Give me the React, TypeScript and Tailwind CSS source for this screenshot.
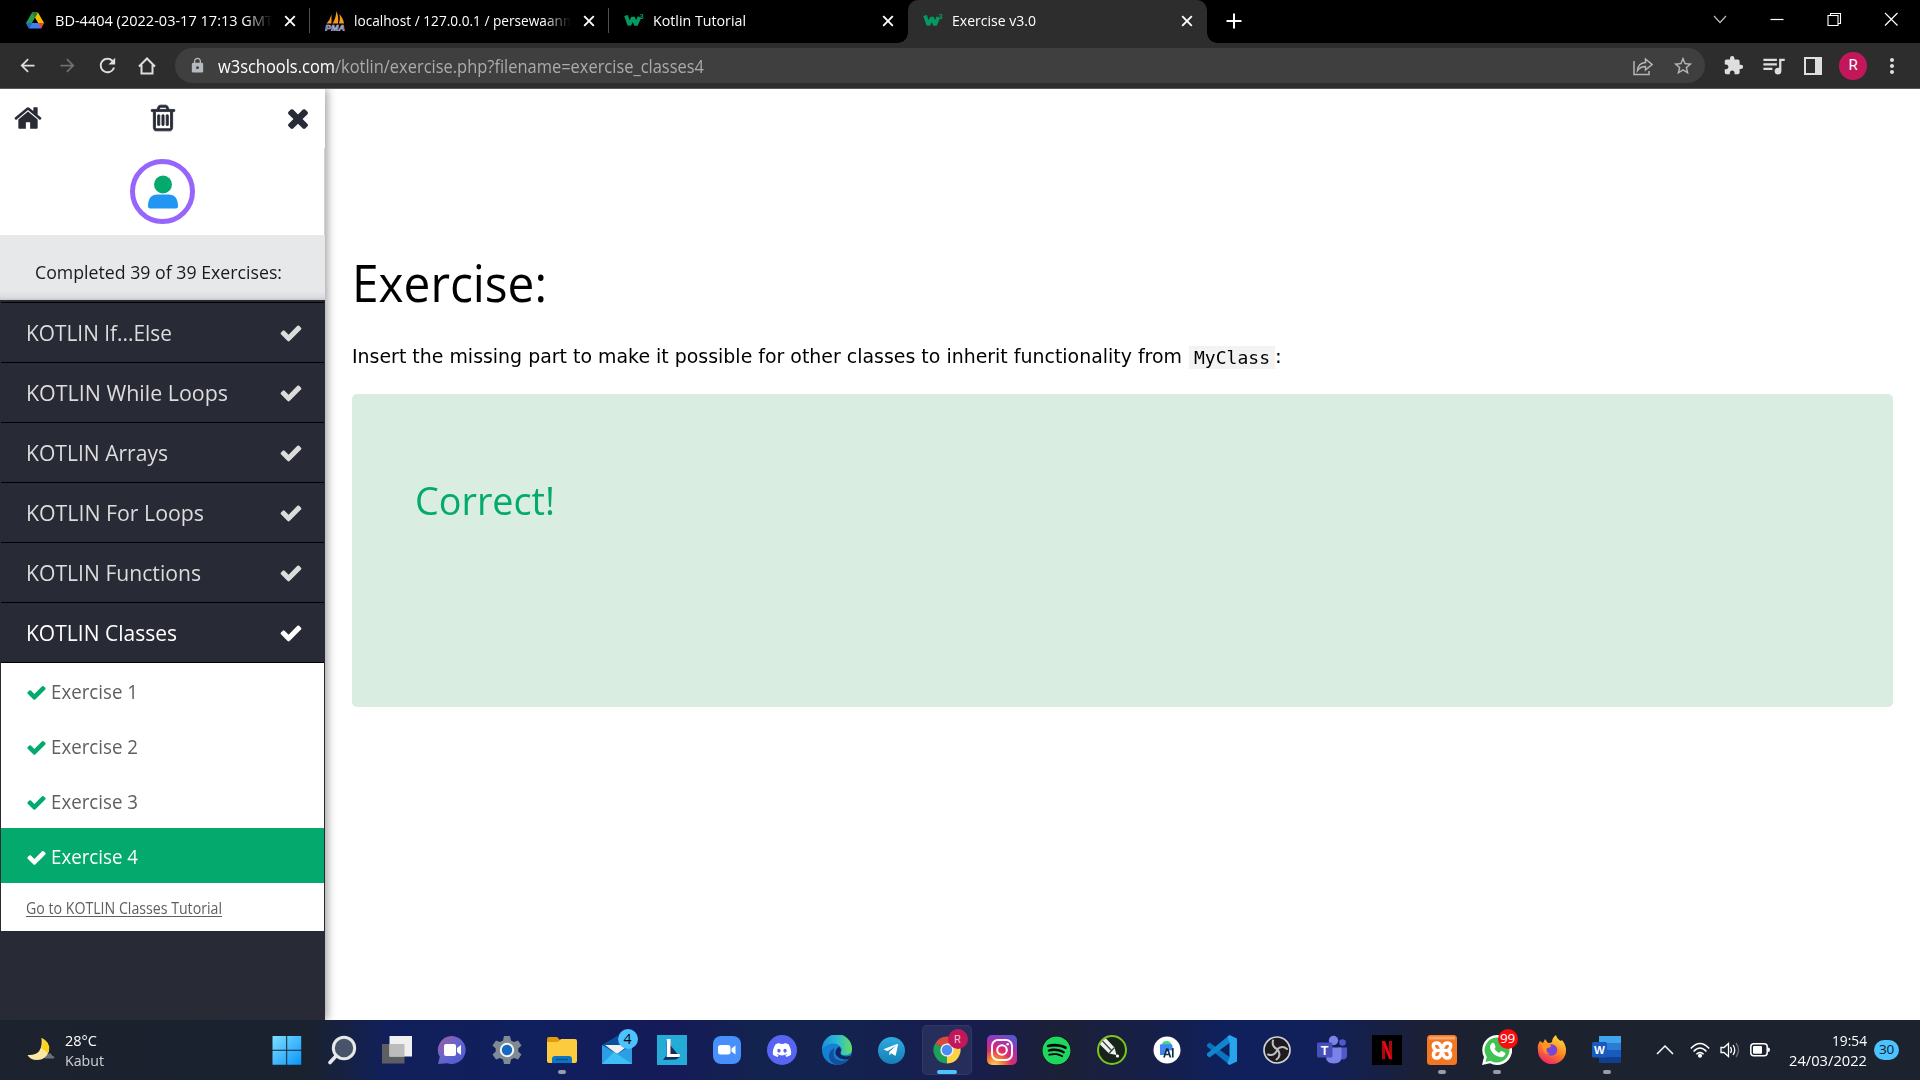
import React, { useLayoutEffect, useRef, useState } from "react";
import { FaDiscord, FaSpotify, FaTelegramPlane } from "react-icons/fa";
import {
  MdArrowBack,
  MdArrowForward,
  MdExtension,
  MdLock,
  MdMoreVert,
  MdQueueMusic,
  MdRefresh,
  MdStarBorder,
} from "react-icons/md";

/** One line of text, condensed or widened to an exact advance width. */
function Fit({ w, className = "", inner = "", children }: { w: number; className?: string; inner?: string; children: React.ReactNode }) {
  const ref = useRef<HTMLSpanElement>(null);
  const [k, setK] = useState(1);
  useLayoutEffect(() => {
    if (ref.current && ref.current.offsetWidth) setK(w / ref.current.getBoundingClientRect().width);
  }, [w]);
  return (
    <span className={"block whitespace-nowrap " + className} style={{ width: w }}>
      <span ref={ref} className={"inline-block origin-left " + inner} style={{ transform: k === 1 ? undefined : `scaleX(${k})` }}>
        {children}
      </span>
    </span>
  );
}

/* ---------- sidebar glyphs ---------- */

const CHECK =
  "M1671 566q0 40-28 68l-724 724-136 136q-28 28-68 28t-68-28l-136-136-362-362q-28-28-28-68t28-68l136-136q28-28 68-28t68 28l294 295 656-657q28-28 68-28t68 28l136 136q28 28 28 68z";
const TIMES =
  "M1490 1322q0 40-28 68l-136 136q-28 28-68 28t-68-28l-294-294-294 294q-28 28-68 28t-68-28l-136-136q-28-28-28-68t28-68l294-294-294-294q-28-28-28-68t28-68l136-136q28-28 68-28t68 28l294 294 294-294q28-28 68-28t68 28l136 136q28 28 28 68t-28 68l-294 294 294 294q28 28 28 68z";
const HOME =
  "M1472 992v480q0 26-19 45t-45 19h-384v-384h-256v384h-384q-26 0-45-19t-19-45v-480q0-1 .5-3t.5-3l575-474 575 474q1 2 1 6zm223-69l-62 74q-8 9-21 11h-3q-13 0-21-7l-692-577-692 577q-12 8-24 7-13-2-21-11l-62-74q-8-10-7-23.5t11-21.5l719-599q32-26 76-26t76 26l244 204v-195q0-14 9-23t23-9h192q14 0 23 9t9 23v408l219 182q10 8 11 21.5t-7 23.5z";
const TRASH =
  "M704 736v576q0 14-9 23t-23 9h-64q-14 0-23-9t-9-23v-576q0-14 9-23t23-9h64q14 0 23 9t9 23zm256 0v576q0 14-9 23t-23 9h-64q-14 0-23-9t-9-23v-576q0-14 9-23t23-9h64q14 0 23 9t9 23zm256 0v576q0 14-9 23t-23 9h-64q-14 0-23-9t-9-23v-576q0-14 9-23t23-9h64q14 0 23 9t9 23zm128 724v-948h-896v948q0 22 7 40.5t14.5 27 10.5 8.5h832q3 0 10.5-8.5t14.5-27 7-40.5zm-672-1076h448l-48-117q-7-9-17-11h-317q-10 2-17 11zm928 32v64q0 14-9 23t-23 9h-96v948q0 83-47 143.5t-113 60.5h-832q-66 0-113-58.5t-47-141.5v-952h-96q-14 0-23-9t-9-23v-64q0-14 9-23t23-9h309l70-167q15-37 54-63t79-26h320q40 0 79 26t54 63l70 167h309q14 0 23 9t9 23z";

function Glyph({ d, className }: { d: string; className: string }) {
  return (
    <svg viewBox="0 0 1792 1792" fill="currentColor" stroke="currentColor" className={"shrink-0 " + className}>
      <path d={d} />
    </svg>
  );
}

/* ---------- tab strip ---------- */

function DriveIcon() {
  return (
    <svg viewBox="0 0 18 17" className="w-[18px] h-[17px]">
      <path d="M6 0.5 0 11l3 5.5L9 6z" fill="#2a9d4a" />
      <path d="M6 .5h6L18 11h-6z" fill="#fbbc04" />
      <path d="M3 16.5 6 11h12l-3 5.5z" fill="#3f7ff0" />
      <path d="M12 11h6l-3 5.5z" fill="#ea4335" />
      <path d="M0 11h6l-3 5.5z" fill="#2566d8" />
      <path d="M6 .5h6L9 6z" fill="#188038" />
      <path d="M9 6l3 5H6z" fill="#000" />
    </svg>
  );
}

function PmaIcon() {
  return (
    <svg viewBox="0 0 21 21" className="w-[21px] h-[21px]">
      <path d="M6.500 4.500 6.500 13.500H1.500Q5 10 6.500 4.500zM11.500 1q2.500 6 1.500 12.500H7.500Q11 8 11.500 1zM14.500 4q4 5 4.500 9.500h-5q1.500-5 .5-9.500z" fill="#f59a1b" />
      <text x="0" y="20.500" textLength="20" lengthAdjust="spacingAndGlyphs" fontFamily="Liberation Sans" fontStyle="italic" fontWeight="700" fontSize="9" fill="#55588f" stroke="#c8c9e2" strokeWidth=".5">
        PMA
      </text>
    </svg>
  );
}

function W3Icon() {
  return (
    <svg viewBox="0 0 20 16" className="w-[20px] h-[16px]">
      <path d="M2 2.500 5.300 12 9 4.500l3 7.500L15.500 4" fill="none" stroke="#059862" strokeWidth="3.800" strokeLinejoin="bevel" />
      <text x="15.500" y="5.500" fontFamily="Liberation Sans" fontWeight="700" fontSize="7.500" fill="#059862">
        3
      </text>
    </svg>
  );
}

function CloseX() {
  return (
    <svg viewBox="0 0 12 12" className="w-3 h-3 shrink-0" stroke="#fff" strokeWidth="1.900">
      <path d="M1.200 1.200l9.600 9.600M10.800 1.200 1.200 10.800" />
    </svg>
  );
}

function Tab({ icon, title, w, active, divider, fade }: { icon: React.ReactNode; title: string; w: number; active?: boolean; divider?: boolean; fade?: boolean }) {
  return (
    <div className={"relative flex h-[43px] w-[299px] shrink-0 items-center pb-[2px] pl-[15px] " + (active ? "rounded-t-[10px] bg-[#2d2d2d]" : "")}>
      {active && (
        <>
          <span className="absolute -left-[10px] bottom-0 h-[10px] w-[10px] bg-[radial-gradient(circle_at_0_0,#000_9.500px,#2d2d2d_10px)]" />
          <span className="absolute -right-[10px] bottom-0 h-[10px] w-[10px] bg-[radial-gradient(circle_at_100%_0,#000_9.500px,#2d2d2d_10px)]" />
        </>
      )}
      <div className="flex w-[29px] shrink-0 items-center">{icon}</div>
      <div className={"w-[218px] shrink-0 overflow-hidden text-[14.5px] leading-[20px] text-white " + (fade ? "[mask-image:linear-gradient(to_right,#000_190px,transparent_217px)]" : "")}>
        <Fit w={w}>{title}</Fit>
      </div>
      <div className="ml-[11px] flex">
        <CloseX />
      </div>
      {divider && <span className="ml-auto h-[25px] w-px bg-[#505050]" />}
    </div>
  );
}

function TabStrip() {
  return (
    <div className="flex h-[43px] bg-black pl-[11px]">
      <Tab icon={<DriveIcon />} title="BD-4404 (2022-03-17 17:13 GMT" w={218} divider fade />
      <Tab icon={<PmaIcon />} title="localhost / 127.0.0.1 / persewaanmobil" w={245} divider fade />
      <Tab icon={<W3Icon />} title="Kotlin Tutorial" w={93} />
      <Tab icon={<W3Icon />} title="Exercise v3.0" w={84} active />
      <svg viewBox="0 0 16 16" className="ml-[19px] mt-[13px] h-4 w-4" stroke="#fff" strokeWidth="2">
        <path d="M8 .5v15M.5 8h15" />
      </svg>
      <div className="ml-auto flex h-[37px] items-center gap-[41px] pr-[21px]">
        <svg viewBox="0 0 16 16" className="h-4 w-4" fill="none" stroke="#bbb" strokeWidth="1.200">
          <path d="M2 5l6 6.500L14 5" />
        </svg>
        <svg viewBox="0 0 16 16" className="h-4 w-4" stroke="#fff" strokeWidth="1.200">
          <path d="M1.500 8.500h13" />
        </svg>
        <svg viewBox="0 0 16 16" className="h-4 w-4" fill="none" stroke="#fff" strokeWidth="1.100">
          <path d="M2 4.500h10v10H2zM4.500 4.500v-2h10v10H12" />
        </svg>
        <svg viewBox="0 0 16 16" className="h-4 w-4" stroke="#fff" strokeWidth="1.200">
          <path d="M2 2l12.500 12.500M14.500 2 2 14.500" />
        </svg>
      </div>
    </div>
  );
}

function Toolbar() {
  return (
    <div className="flex h-[46px] items-center border-b border-[#5a5a5a] bg-[#2d2d2d] text-[#dedede]">
      <div className="flex w-[175px] items-center pl-[17px]">
        <MdArrowBack className="h-[21px] w-[21px]" />
        <MdArrowForward className="ml-[19px] h-[21px] w-[21px] text-[#6f6f6f]" />
        <MdRefresh className="ml-[18px] h-[23px] w-[23px]" />
        <svg viewBox="0 0 20 20" className="ml-[18px] h-5 w-5" fill="none" stroke="currentColor" strokeWidth="2">
          <path d="M2 10.500 10 2.500l8 8M4.500 9v8.500h11V9" />
        </svg>
      </div>
      <div className="flex h-[35px] w-[1530px] items-center rounded-full bg-[#3f3f3f]">
        <MdLock className="ml-[14px] h-[17px] w-[17px] text-[#b6bac0]" />
        <div className="ml-[12px] flex text-[17.5px] leading-[24px]">
          <Fit w={117} className="text-white">w3schools.com</Fit>
          <Fit w={369} className="text-[#a9abae]">/kotlin/exercise.php?filename=exercise_classes4</Fit>
        </div>
        <div className="ml-auto flex items-center gap-[19px] pr-[11px] text-[#b5b5b5]">
          <svg viewBox="0 0 20 20" className="h-5 w-5" fill="none" stroke="currentColor" strokeWidth="1.500">
            <path d="M1 5v13.500h15V15" />
            <path d="M4.500 14.500Q5 7 12.500 6.500V3L19 8.500 12.500 14v-3.500Q7.500 10.500 4.500 14.500z" />
          </svg>
          <MdStarBorder className="h-[22px] w-[22px]" />
        </div>
      </div>
      <div className="ml-auto flex items-center pr-[16px]">
        <MdExtension className="h-[21px] w-[21px]" />
        <MdQueueMusic className="ml-[16px] h-[27px] w-[27px]" />
        <svg viewBox="0 0 18 18" className="ml-[17px] h-[18px] w-[18px]">
          <path d="M1 1h16v16H1z" fill="none" stroke="currentColor" strokeWidth="2" />
          <path d="M11 1h6v16h-6z" fill="currentColor" />
        </svg>
        <div className="ml-[17px] flex h-7 w-7 items-center justify-center rounded-full bg-[#c2185b] font-[Roboto] text-[15px] text-white">R</div>
        <MdMoreVert className="ml-[13px] h-[24px] w-[24px]" />
      </div>
    </div>
  );
}

/* ---------- page ---------- */

const SECTIONS: [string, number][] = [
  ["KOTLIN If...Else", 146],
  ["KOTLIN While Loops", 202],
  ["KOTLIN Arrays", 142],
  ["KOTLIN For Loops", 178],
  ["KOTLIN Functions", 175],
  ["KOTLIN Classes", 151],
];

function Sidebar() {
  return (
    <aside className="relative z-10 flex w-[325px] shrink-0 flex-col bg-[#282a35] shadow-[2px_0_9px_rgba(0,0,0,0.4)]">
      <div className="flex h-[59px] items-center justify-between bg-white pb-[2px] pl-[13px] pr-[12px] text-[#282a35]">
        <Glyph d={HOME} className="h-[30px] w-[30px]" />
        <Glyph d={TRASH} className="h-[30px] w-[30px] stroke-[50px]" />
        <Glyph d={TIMES} className="h-[30px] w-[30px]" />
      </div>
      <div className="flex h-[87px] justify-center border-r border-[#d4d4d4] bg-white pt-[11px]">
        <div className="h-[65px] w-[65px] rounded-full border-[5px] border-[#9865fc]">
          <svg viewBox="0 0 55 55" className="h-[55px] w-[55px]">
            <circle cx="28" cy="20.500" r="9" fill="#04aa6d" />
            <path d="M13 42.500q0-12 9.500-12h11q9.500 0 9.500 12 0 2-2 2H15q-2 0-2-2z" fill="#2196f3" />
          </svg>
        </div>
      </div>
      <div className="h-[65px] bg-[linear-gradient(#e7e8ea_56px,#dcdddf_62px,#c8c9cb_65px)] pl-[35px] pt-[23px] text-[18.5px] leading-[28px] text-[#1a1a1a]">
        <Fit w={247}>Completed 39 of 39 Exercises:</Fit>
      </div>
      <div className="mx-px mt-[2px] border-t border-black">
        {SECTIONS.map(([name, w], i) => (
          <div
            key={name}
            className={"flex h-[60px] items-center justify-between border-b border-black pl-[25px] pr-[21px] text-[22.5px] leading-[30px] " + (i === 5 ? "text-white" : "text-[#dcdcdc]")}
          >
            <Fit w={w}>{name}</Fit>
            <Glyph d={CHECK} className="h-[24px] w-[24px]" />
          </div>
        ))}
      </div>
      <div className="mx-px bg-white text-[#5f5f5f]">
        {[1, 2, 3, 4].map((n) => (
          <div key={n} className={"flex h-[55px] items-center pb-px pl-[25px] text-[19.5px] leading-[28px] " + (n === 4 ? "bg-[#04aa6d] text-white" : "")}>
            <Glyph d={CHECK} className={"mt-[4px] h-[21px] w-[21px] " + (n === 4 ? "" : "text-[#04aa6d]")} />
            <Fit w={87} className="ml-[4px] mt-[3px]">{"Exercise " + n}</Fit>
          </div>
        ))}
        <div className="flex h-[48px] items-center pl-[25px] pt-px text-[16px] leading-[22px]">
          <Fit w={196} inner="underline underline-offset-[2px]">Go to KOTLIN Classes Tutorial</Fit>
        </div>
      </div>
    </aside>
  );
}

function Exercise() {
  return (
    <main className="flex-1 bg-white pl-[27px] pr-[27px] pt-[157px] text-black">
      <h1 className="text-[52px] leading-[72px]">
        <Fit w={195}>Exercise:</Fit>
      </h1>
      <div className="mt-[25px] flex h-[28px] items-center font-['DejaVu_Sans'] text-[19.500px] leading-[28px]">
        <Fit w={830}>Insert the missing part to make it possible for other classes to inherit functionality from</Fit>
        <div className="ml-[7px] h-[23px] bg-[#f3f3f3] px-[5px] font-['DejaVu_Sans_Mono'] text-[18.500px] leading-[23px]">
          <Fit w={76}>MyClass</Fit>
        </div>
        <span>:</span>
      </div>
      <div className="mt-[23px] h-[313px] rounded-[5px] bg-[#d9ede1] pl-[63px] pt-[78px] text-[38.500px] leading-[56px] text-[#04aa6d]">
        <Fit w={140}>Correct!</Fit>
      </div>
    </main>
  );
}

/* ---------- taskbar ---------- */

function Svg({ children }: { children: React.ReactNode }) {
  return (
    <svg viewBox="0 0 30 30" className="h-[30px] w-[30px]">
      {children}
    </svg>
  );
}

const APPS: { name: string; icon: React.ReactNode; dot?: boolean; active?: boolean; badge?: React.ReactNode }[] = [
  {
    name: "start",
    icon: (
      <Svg>
        <defs>
          <linearGradient id="win" x1="0" y1="0" x2="1" y2="1">
            <stop offset="0" stopColor="#7de0ff" />
            <stop offset="1" stopColor="#0a95fb" />
          </linearGradient>
        </defs>
        <path d="M.5 1h13.700v13.700H.5zM15.200 1h14v13.700h-14zM.5 15.700h13.700v14H.5zM15.200 15.700h14v14h-14z" fill="url(#win)" />
      </Svg>
    ),
  },
  {
    name: "search",
    icon: (
      <Svg>
        <circle cx="17" cy="13" r="10.700" fill="#48546a" stroke="#e6e8ea" strokeWidth="3" />
        <path d="M9 21l-6 6.500" stroke="#e6e8ea" strokeWidth="3.600" strokeLinecap="round" />
      </Svg>
    ),
  },
  {
    name: "task view",
    icon: (
      <Svg>
        <path d="M0 9h22.500v19.500H0z" fill="#5d5e61" />
        <path d="M7.500 1H30v20.500H7.500z" fill="#f0f0f0" />
        <path d="M7.500 9h15v12.500h-15z" fill="#bcbcbc" />
      </Svg>
    ),
  },
  {
    name: "chat",
    icon: (
      <Svg>
        <defs>
          <linearGradient id="chat" x1="0" y1="0" x2="1" y2="1">
            <stop offset="0" stopColor="#a15f9e" />
            <stop offset=".5" stopColor="#6464cf" />
            <stop offset="1" stopColor="#4e58cf" />
          </linearGradient>
        </defs>
        <path d="M15 1a14 14 0 1 1-5 27.200L1 29l1.800-7A14 14 0 0 1 15 1z" fill="url(#chat)" />
        <rect x="7" y="9" width="12" height="12" rx="2" fill="#fff" />
        <path d="M20 13l4-3v10l-4-3z" fill="#fff" />
      </Svg>
    ),
  },
  {
    name: "settings",
    icon: (
      <Svg>
        <path d="M12 1h6l1 4.500 3 1.500 4-1.500 3.500 5-3.200 3v3l3.200 3-3.500 5-4-1.500-3 1.500-1 4.500h-6l-1-4.500L8 23l-4 1.500-3.500-5 3.200-3v-3l-3.200-3 3.500-5L8 7l3-1.500z" fill="#7f8a93" />
        <circle cx="15" cy="15" r="6.200" fill="#1769c0" stroke="#f2f4f6" strokeWidth="2" />
      </Svg>
    ),
  },
  {
    name: "explorer",
    dot: true,
    icon: (
      <Svg>
        <path d="M0 4q0-2 2-2h8l3 3v4H0z" fill="#e19a08" />
        <path d="M0 7h11l3-3h14q2 0 2 2v20q0 2-2 2H2q-2 0-2-2z" fill="#fdcb3e" />
        <path d="M5 28v-4q0-3 3-3h14q3 0 3 3v4z" fill="#0f74c4" />
        <path d="M9 24.500h12" stroke="#0a4c88" strokeWidth="1.200" />
      </Svg>
    ),
  },
  {
    name: "mail",
    badge: <span className="flex h-5 w-5 items-center justify-center rounded-full bg-[#4cc2ff] text-[14px] leading-none text-black">4</span>,
    icon: (
      <Svg>
        <path d="M0 10 15 1l15 9v8H0z" fill="#0b4f9c" />
        <path d="M3 10h24l-12 9z" fill="#f0f0f0" />
        <path d="M0 10v19h30V10L15 19z" fill="#2a9fe6" />
        <path d="M0 29h30L12 17z" fill="#3dc0f5" />
      </Svg>
    ),
  },
  {
    name: "lightshot",
    icon: (
      <Svg>
        <path d="M0 0h30v30H0z" fill="#24abd8" />
        <path d="M9 5v16L6 25l13-.5 4-2.500z" fill="#12305f" />
        <text x="8" y="22" fontFamily="Liberation Sans" fontWeight="700" fontSize="25" fill="#fff">L</text>
      </Svg>
    ),
  },
  {
    name: "zoom",
    icon: (
      <Svg>
        <rect x="1" y="1" width="28" height="28" rx="8" fill="#4790fb" />
        <rect x="6" y="10" width="12.500" height="9.500" rx="2.500" fill="#fff" />
        <path d="M19.500 13.500l4-3v9l-4-3z" fill="#fff" />
      </Svg>
    ),
  },
  {
    name: "discord",
    icon: (
      <span className="flex h-[30px] w-[30px] items-center justify-center rounded-full bg-[#5865f2] text-white">
        <FaDiscord className="h-[20px] w-[20px]" />
      </span>
    ),
  },
  {
    name: "edge",
    icon: (
      <Svg>
        <defs>
          <linearGradient id="edge" x1="0" y1="0.500" x2="1" y2=".5">
            <stop offset="0" stopColor="#1b8fd8" />
            <stop offset=".5" stopColor="#2bb9d6" />
            <stop offset="1" stopColor="#64df60" />
          </linearGradient>
        </defs>
        <circle cx="15" cy="15" r="15" fill="#1280d4" />
        <path d="M0 14A15 15 0 0 1 30 14q0 6-7 6-5 0-4-3 2-3-1-6Q10 5 0 14z" fill="url(#edge)" />
        <path d="M12.500 13q-4 12 8 13 4 0 7-3-4 7-12.500 7-9-3-8-10 1-5 5.500-7z" fill="#144f9c" />
        <path d="M17 11.500q3 3 1.500 6-1 3 6 4l4.500-1-2 3.500Q17 26 13.500 19q-.5-5 3.500-7.500z" fill="#11245e" />
      </Svg>
    ),
  },
  {
    name: "telegram",
    icon: (
      <span className="flex h-[27px] w-[27px] items-center justify-center rounded-full bg-[linear-gradient(#2fabdf,#157fb8)] text-white">
        <FaTelegramPlane className="mr-[2px] h-[16px] w-[16px]" />
      </span>
    ),
  },
  {
    name: "chrome",
    active: true,
    badge: <span className="flex h-5 w-5 items-center justify-center rounded-full bg-[#c2185b] font-[Roboto] text-[11px] leading-none text-[#f5c5d8]">R</span>,
    icon: (
      <Svg>
        <path d="M15 15 3.300 8.200A13.500 13.500 0 0 1 26.700 8.200z" fill="#db4a3b" />
        <path d="M15 15 26.700 8.200A13.500 13.500 0 0 1 15 28.500z" fill="#fdd247" />
        <path d="M15 15v13.500A13.500 13.500 0 0 1 3.300 8.200z" fill="#1da05a" />
        <path d="M15 8.500h12L21 19l-6 9.500V15z" fill="#fdd247" />
        <circle cx="15" cy="15" r="6.600" fill="#f1f1f1" />
        <circle cx="15" cy="15" r="5.200" fill="#4c8bf5" />
      </Svg>
    ),
  },
  {
    name: "instagram",
    icon: (
      <Svg>
        <defs>
          <radialGradient id="insta" cx=".25" cy="1.050" r="1.150">
            <stop offset="0" stopColor="#fed576" />
            <stop offset=".25" stopColor="#f58529" />
            <stop offset=".5" stopColor="#dd2a6b" />
            <stop offset=".8" stopColor="#a033b8" />
            <stop offset="1" stopColor="#5258cf" />
          </radialGradient>
        </defs>
        <rect width="30" height="30" rx="5" fill="url(#insta)" />
        <rect x="5" y="5" width="20" height="20" rx="6" fill="none" stroke="#fff" strokeWidth="2" />
        <circle cx="15" cy="15" r="4.800" fill="none" stroke="#fff" strokeWidth="2" />
        <circle cx="20.700" cy="9.300" r="1.300" fill="#fff" />
      </Svg>
    ),
  },
  {
    name: "spotify",
    icon: (
      <span className="flex h-[29px] w-[29px] items-center justify-center rounded-full bg-black text-[#1ed760]">
        <FaSpotify className="h-[29px] w-[29px]" />
      </span>
    ),
  },
  {
    name: "corel",
    icon: (
      <Svg>
        <circle cx="15" cy="15" r="14" fill="#16241a" stroke="#7bc61d" strokeWidth="2" />
        <path d="M3 9.500Q5 5 9 3.500l8.500 9L19.500 20l-7.500-1.500z" fill="#f1f1f1" />
        <path d="M5.500 6l9 9.500M12 18.500l5.500-6" stroke="#3b443d" strokeWidth="1.300" />
        <circle cx="20.500" cy="21" r="1.600" fill="#fff" />
      </Svg>
    ),
  },
  {
    name: "android studio",
    icon: (
      <Svg>
        <circle cx="15" cy="15" r="13.500" fill="#fff" />
        <path d="M10 10q0-4 4.500-4t5 4z" fill="#3ddc84" />
        <path d="M8 9.500h12v4h-4L13 20H8z" fill="#3f82f0" />
        <rect x="8" y="9.500" width="12.500" height="6" rx="1.500" fill="#4285f4" />
        <path d="M12 22.500l2.700-8.500h1l2.800 8.500M13 19.500h4.500M20.800 13v9.500" fill="none" stroke="#0b3049" strokeWidth="1.700" />
      </Svg>
    ),
  },
  {
    name: "vs code",
    icon: (
      <Svg>
        <path d="M0 9.500l2.500-2L22.500 22v8L0 11.500z" fill="#0b74bf" />
        <path d="M0 20.500l2.500 2L22.500 8V0L0 18.500z" fill="#1186d0" />
        <path d="M22.500 0 30 3.500v23L22.500 30l-2-1.500 2-6.500V8l-2-6z" fill="#28a4ee" />
      </Svg>
    ),
  },
  {
    name: "obs",
    icon: (
      <Svg>
        <circle cx="15" cy="15" r="13" fill="#1e1b1f" stroke="#d3d3d5" strokeWidth="1.700" />
        <path d="M11 5.500q-1.500 6 4 8.500M25 14q-4.500-4-9.500 0M14.500 24.500q5-3.500 1.500-9.500M6 19.500q6 2 9-4" fill="none" stroke="#bdbdc2" strokeWidth="2" strokeLinecap="round" />
      </Svg>
    ),
  },
  {
    name: "teams",
    icon: (
      <Svg>
        <circle cx="25.500" cy="7.500" r="3.300" fill="#5059c9" />
        <path d="M21 12.500h9v8q0 4-4.500 4H21z" fill="#5059c9" />
        <circle cx="16.500" cy="5.500" r="4.700" fill="#7b83eb" />
        <path d="M9 12.500h15.500v9q0 7-7.700 7-7.800 0-7.800-7z" fill="#7b83eb" />
        <rect x="0" y="7.500" width="15.500" height="15" rx="1.500" fill="#4650b8" />
        <text x="3.700" y="19.500" fontFamily="Liberation Sans" fontWeight="700" fontSize="12.500" fill="#fff">T</text>
      </Svg>
    ),
  },
  {
    name: "netflix",
    icon: (
      <Svg>
        <path d="M0 0h30v30H0z" fill="#000" />
        <path d="M10 6h3v18l-3 .3zM17 6h3v18.300l-3-.3z" fill="#b1060f" />
        <path d="M10 6h3l7 18.300-3-.3z" fill="#e50914" />
      </Svg>
    ),
  },
  {
    name: "xampp",
    dot: true,
    icon: (
      <Svg>
        <rect width="30" height="30" rx="3.500" fill="#f37623" />
        <path d="M2 1.500h26v3H2z" fill="#f9a56c" />
        <path d="M11 15.500h8M14 12Q13 8 9.500 8 5.500 8 6.500 12q.5 2 2.500 3.500-3 2-2.500 5 .5 3 4 2.500Q13 22.500 14 19M16 12q1-4 4.500-4 4 0 3 4-.5 2-2.500 3.500 3 2 2.500 5-.5 3-4 2.500Q17 22.500 16 19" fill="none" stroke="#fff" strokeWidth="3.500" strokeLinejoin="round" strokeLinecap="round" />
      </Svg>
    ),
  },
  {
    name: "whatsapp",
    dot: true,
    badge: <span className="flex h-5 w-5 items-center justify-center rounded-full bg-[#fb0b0b] text-[13.5px] leading-none tracking-tight text-white">99</span>,
    icon: (
      <Svg>
        <path d="M15 0a15 15 0 1 1-7 28.200L0 30l2-8A15 15 0 0 1 15 0z" fill="#fff" />
        <path d="M15 2.500a12.500 12.500 0 1 1-6.500 23.200L3.500 27l1.300-5A12.500 12.500 0 0 1 15 2.500z" fill="#3fc351" />
        <path d="M9.500 8.500q2-1.500 3 .5l1 2.500q.3 1-1 2.300 1.500 3 4.500 4.200l1.500-1.500q.7-.7 1.700-.2l2.500 1.200q1 .6.500 2-1.200 3-4.700 2.600Q10 20.500 8 13q-.3-3 1.500-4.500z" fill="#fff" />
      </Svg>
    ),
  },
  {
    name: "firefox",
    icon: (
      <Svg>
        <defs>
          <linearGradient id="fox" x1=".8" y1="0" x2=".3" y2="1">
            <stop offset="0" stopColor="#ffe23f" />
            <stop offset=".5" stopColor="#ff8a1e" />
            <stop offset="1" stopColor="#f0226a" />
          </linearGradient>
        </defs>
        <path d="M3 6l3 2 2-4 3 4q3 0 4-1 0-4 4-7 1 4 5 6 1-1 1-1 4 5 4 10a14 13.500 0 0 1-28 1Q0 10 3 6z" fill="url(#fox)" />
        <circle cx="14.500" cy="15" r="5.800" fill="#7b45d6" />
        <path d="M5 9q5-1.500 9 1.500 0 2-4 2.500-2 4 3 6Q5 20 5 9z" fill="#ff9420" />
      </Svg>
    ),
  },
  {
    name: "word",
    dot: true,
    icon: (
      <Svg>
        <path d="M7 1h22v7H7z" fill="#41a5ee" />
        <path d="M7 8h22v7H7z" fill="#2b7cd3" />
        <path d="M7 15h22v7H7z" fill="#185abd" />
        <path d="M7 22h22v6H7z" fill="#103f91" />
        <rect x="0" y="7" width="15" height="15.500" rx="1.500" fill="#185abd" />
        <text x="2" y="19" fontFamily="Liberation Sans" fontWeight="700" fontSize="11.500" fill="#fff">W</text>
      </Svg>
    ),
  },
];

function Taskbar() {
  return (
    <div className="flex h-[60px] items-center bg-[linear-gradient(90deg,#1c222e_0,#1a222f_310px,#11205a_385px,#101f5e_540px,#151a58_670px,#13234f_760px,#13224f_850px,#171d50_960px,#1c2037_1060px,#161f48_1150px,#0f205d_1225px,#11205a_1320px,#1b2036_1420px,#1c222e_1500px)] text-white">
      <div className="flex w-[259px] items-center pl-[27px]">
        <svg viewBox="0 0 28 26" className="h-[26px] w-[28px]">
          <path d="M18 21.500q-1-4 3-4.500 3-2 4 1.500l2 1q1 2-1 2z" fill="#6c7076" />
          <path d="M14.500 1q9 4 7.500 13-3 9-12 9Q3 23 .5 18q16 1 14-17z" fill="#fce8a0" />
          <path d="M14.500 1q9 4 7.500 13l-1 2-7-5q3-5 .5-10z" fill="#fbd21c" />
        </svg>
        <div className="ml-[10px] text-[15px] leading-[20px]">
          <Fit w={32}>28°C</Fit>
          <Fit w={39} className="text-[#d0d2d5]">Kabut</Fit>
        </div>
      </div>
      <div className="flex">
        {APPS.map((a) => (
          <div key={a.name} className="flex w-[55px] justify-center">
            <div className={"relative flex h-[50px] w-[50px] items-center justify-center " + (a.active ? "rounded-[5px] bg-white/7 ring-1 ring-white/5 ring-inset" : "")}>
              {a.icon}
              {a.badge && <span className="absolute left-[26px] top-[4px]">{a.badge}</span>}
              {a.dot && <span className="absolute bottom-px left-[21px] h-1 w-2 rounded-full bg-[#9a9ca8]" />}
              {a.active && <span className="absolute bottom-px left-[15px] h-1 w-5 rounded-full bg-[#4cc2ff]" />}
            </div>
          </div>
        ))}
      </div>
      <div className="ml-auto flex items-center pr-[21px]">
        <svg viewBox="0 0 18 18" className="h-[18px] w-[18px]" fill="none" stroke="#fff" strokeWidth="1.500">
          <path d="M1 13l8-8 8 8" />
        </svg>
        <svg viewBox="0 0 20 16" className="ml-[16px] h-[16px] w-[20px]" fill="none" stroke="#fff" strokeWidth="1.500">
          <path d="M.8 6.500q9.200-10 18.400 0M3.600 9.500q6.400-7 12.800 0M6.400 12.300q3.600-3.800 7.200 0" />
          <circle cx="10" cy="13.800" r="1.300" fill="#fff" />
        </svg>
        <svg viewBox="0 0 21 18" className="ml-[10px] h-[18px] w-[21px]" fill="none" stroke="#fff" strokeWidth="1.300">
          <path d="M1 6.500h3l4.500-4v13l-4.500-4H1zM10.500 6q2 3 0 6" />
          <path d="M13 4q3.500 5 0 10" />
          <path d="M16 2q5 7 0 14" stroke="#6b7079" />
        </svg>
        <svg viewBox="0 0 20 14" className="ml-[9px] h-[14px] w-[20px]">
          <rect x=".8" y=".8" width="16.400" height="12" rx="3" fill="none" stroke="#fff" strokeWidth="1.500" />
          <rect x="3" y="3" width="9" height="7.700" rx="1" fill="#fff" />
          <path d="M18 4.500q2 0 2 2.300T18 9z" fill="#fff" />
        </svg>
        <div className="ml-[18px] flex w-[79px] flex-col items-end text-[15px] leading-[20px]">
          <Fit w={35}>19:54</Fit>
          <Fit w={78}>24/03/2022</Fit>
        </div>
        <div className="ml-[7px] flex h-5 w-[25px] items-center justify-center rounded-full bg-[#4cc2ff] text-[13.5px] leading-none tracking-tight text-[#10202c]">30</div>
      </div>
    </div>
  );
}

export default function App() {
  return (
    <div className="flex h-[1080px] w-[1920px] flex-col overflow-hidden bg-white font-['Open_Sans',sans-serif]">
      <TabStrip />
      <Toolbar />
      <div className="flex min-h-0 flex-1 overflow-hidden">
        <Sidebar />
        <Exercise />
      </div>
      <Taskbar />
    </div>
  );
}
